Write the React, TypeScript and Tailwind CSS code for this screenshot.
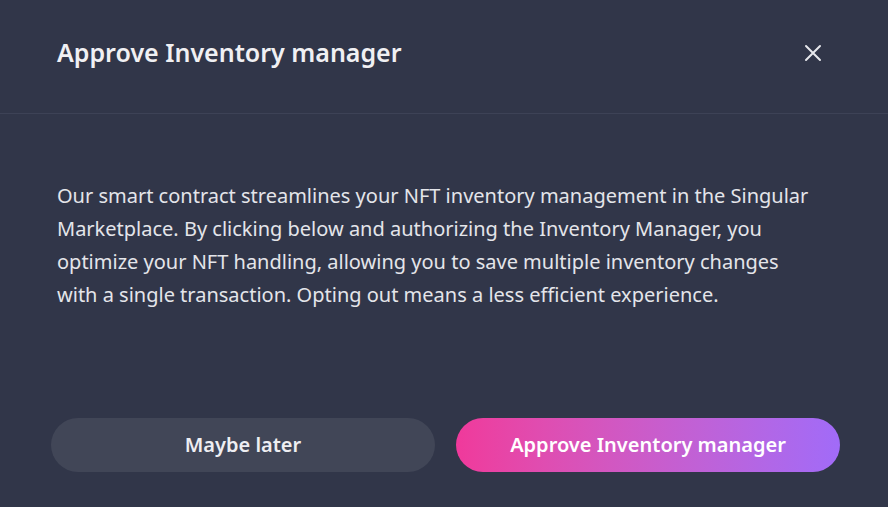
import React from "react";

export default function App() {
  return (
    <div
      className="w-[888px] h-[507px] bg-[#313649] flex flex-col text-[#ececf0]"
      style={{ fontFamily: '"Segoe UI", "Noto Sans", sans-serif' }}
    >
      <div className="h-[114px] flex items-center justify-between pl-[57px] pr-[66px] border-b border-[#3d4256] shrink-0">
        <h1 className="text-[25px] font-semibold text-[#f0f0f3] leading-none -mt-[8px]">
          Approve Inventory manager
        </h1>
        <button className="text-[#e6e7ec] -mt-[8px]" aria-label="Close">
          <svg width="18" height="18" viewBox="0 0 18 18" fill="none" stroke="currentColor" strokeWidth="2" strokeLinecap="round">
            <path d="M2 2L16 16M16 2L2 16" />
          </svg>
        </button>
      </div>
      <div className="pl-[57px] pt-[65px] grow">
        <p className="w-[760px] text-[20px] leading-[33px] text-[#e4e5ea]">
          Our smart contract streamlines your NFT inventory management in the Singular Marketplace. By clicking below and authorizing the Inventory Manager, you optimize your NFT handling, allowing you to save multiple inventory changes with a single transaction. Opting out means a less efficient experience.
        </p>
      </div>
      <div className="flex gap-[21px] pl-[51px] pb-[35px]">
        <button className="w-[384px] h-[54px] rounded-full bg-[#414657] text-[20px] font-semibold text-[#eeeef2]">
          Maybe later
        </button>
        <button className="w-[384px] h-[54px] rounded-full bg-gradient-to-r from-[#f0399b] to-[#a16bf8] text-[20px] font-semibold text-white">
          Approve Inventory manager
        </button>
      </div>
    </div>
  );
}
